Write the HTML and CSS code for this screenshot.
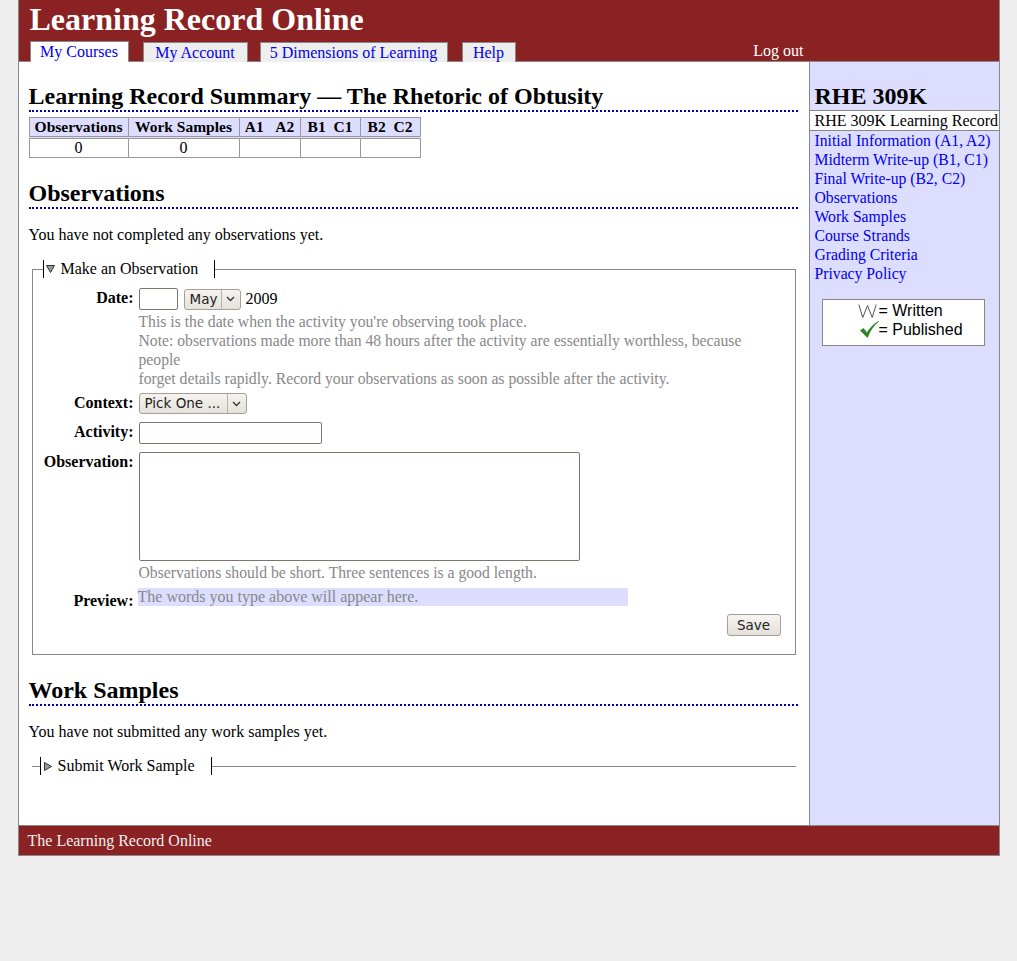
FILE: index.html
```html
<!DOCTYPE html>
<html lang="en">
<head>
<meta charset="utf-8">
<title>Learning Record Online</title>
<link rel="stylesheet" href="styles.css">
</head>
<body>
<div class="page">
  <header class="masthead">
    <h1 class="site-title">Learning Record Online</h1>
    <nav class="tabs">
      <a class="tab tab-active tab-courses" href="#">My Courses</a>
      <a class="tab tab-account" href="#">My Account</a>
      <a class="tab tab-dims" href="#">5 Dimensions of Learning</a>
      <a class="tab tab-help" href="#">Help</a>
      <a class="logout" href="#">Log out</a>
    </nav>
  </header>

  <div class="layout">
    <main class="main">
      <h2 class="section-title first">Learning Record Summary — The Rhetoric of Obtusity</h2>
      <table class="summary">
        <thead>
          <tr>
            <th class="c1">Observations</th>
            <th class="c2">Work Samples</th>
            <th class="c3">A1&nbsp;&nbsp;&nbsp;A2</th>
            <th class="c4">B1&nbsp;&nbsp;C1</th>
            <th class="c5">B2&nbsp;&nbsp;C2</th>
          </tr>
        </thead>
        <tbody>
          <tr>
            <td>0</td>
            <td>0</td>
            <td></td>
            <td></td>
            <td></td>
          </tr>
        </tbody>
      </table>

      <h2 class="section-title obs-title">Observations</h2>
      <p class="note">You have not completed any observations yet.</p>

      <fieldset class="box">
        <legend class="box-legend">
          <svg class="tri" width="9" height="8" viewBox="0 0 9 8"><polygon points="0.5,0.5 8.5,0.5 4.5,7.5" fill="#9a9a9a" stroke="#333" stroke-width="1"/></svg>
          <span>Make an Observation</span>
        </legend>

        <div class="row row-date">
          <label class="lbl">Date:</label>
          <div class="field">
            <div class="inline">
              <span class="input input-day"></span>
              <span class="select select-month"><span class="select-val">May</span><span class="select-arrow"><svg width="9" height="6" viewBox="0 0 9 6"><polyline points="1,1 4.5,4.5 8,1" fill="none" stroke="#333" stroke-width="1.3"/></svg></span></span>
              <span class="year">2009</span>
            </div>
            <div class="help">This is the date when the activity you're observing took place.<br>Note: observations made more than 48 hours after the activity are essentially worthless, because people<br>forget details rapidly. Record your observations as soon as possible after the activity.</div>
          </div>
        </div>

        <div class="row row-context">
          <label class="lbl">Context:</label>
          <div class="field">
            <span class="select select-context"><span class="select-val">Pick One ...</span><span class="select-arrow"><svg width="9" height="6" viewBox="0 0 9 6"><polyline points="1,1 4.5,4.5 8,1" fill="none" stroke="#333" stroke-width="1.3"/></svg></span></span>
          </div>
        </div>

        <div class="row row-activity">
          <label class="lbl">Activity:</label>
          <div class="field">
            <span class="input input-activity"></span>
          </div>
        </div>

        <div class="row row-obs">
          <label class="lbl">Observation:</label>
          <div class="field">
            <span class="input input-text"></span>
            <div class="help help-short">Observations should be short. Three sentences is a good length.</div>
          </div>
        </div>

        <div class="row row-preview">
          <label class="lbl">Preview:</label>
          <div class="field">
            <div class="preview">The words you type above will appear here.</div>
          </div>
        </div>

        <div class="actions">
          <span class="btn">Save</span>
        </div>
      </fieldset>

      <h2 class="section-title work-title">Work Samples</h2>
      <p class="note note-work">You have not submitted any work samples yet.</p>

      <fieldset class="box box-collapsed">
        <legend class="box-legend legend-collapsed">
          <svg class="tri" width="8" height="9" viewBox="0 0 8 9"><polygon points="0.5,0.5 7.5,4.5 0.5,8.5" fill="#9a9a9a" stroke="#333" stroke-width="1"/></svg>
          <span>Submit Work Sample</span>
        </legend>
      </fieldset>
    </main>

    <aside class="side">
      <h2 class="side-title">RHE 309K</h2>
      <div class="side-current">RHE 309K Learning Record</div>
      <ul class="side-links">
        <li><a href="#">Initial Information (A1, A2)</a></li>
        <li><a href="#">Midterm Write-up (B1, C1)</a></li>
        <li><a href="#">Final Write-up (B2, C2)</a></li>
        <li><a href="#">Observations</a></li>
        <li><a href="#">Work Samples</a></li>
        <li><a href="#">Course Strands</a></li>
        <li><a href="#">Grading Criteria</a></li>
        <li><a href="#">Privacy Policy</a></li>
      </ul>
      <div class="key">
        <div class="key-inner">
          <div class="key-row"><svg class="key-w" width="19" height="14" viewBox="0 0 19 14"><polyline points="0.8,0.5 4.8,13.5 9.5,1.5 14.2,13.5 18.2,0.5" fill="none" stroke="#555" stroke-width="1"/></svg><span>= Written</span></div>
          <div class="key-row"><svg class="key-check" width="19" height="17" viewBox="0 0 19 17"><path d="M0.5,9.5 L3.5,7.5 L7,12 C9.5,7.5 13.5,3 18.5,0.5 C13.5,4.5 10,9.5 7.5,16.5 Z" fill="#2a8a1e" stroke="#1d6d14" stroke-width="0.6"/></svg><span>= Published</span></div>
        </div>
      </div>
    </aside>
  </div>

  <footer class="footer">The Learning Record Online</footer>
</div>
</body>
</html>
```

FILE: styles.css
```css
html, body {
  margin: 0;
  padding: 0;
  background: #eeeeee;
}

body {
  font-family: "Liberation Serif", "Times New Roman", serif;
  font-size: 16px;
  color: #000;
}

a {
  color: #0000ee;
  text-decoration: none;
}

.page {
  width: 980px;
  margin: 0 auto;
  border: 1px solid #888;
  border-top: 0;
  background: #fff;
}

/* masthead */
.masthead {
  background: #8a2224;
  padding: 0 0 0 11px;
}

.site-title {
  margin: 0;
  font-size: 32px;
  line-height: 38px;
  font-weight: bold;
  color: #fff;
}

.tabs {
  display: flex;
  align-items: flex-end;
  margin-top: 3px;
  width: 774px;
  height: 20px;
}

.tab {
  position: relative;
  display: block;
  box-sizing: border-box;
  height: 20px;
  line-height: 20px;
  margin-bottom: -1px;
  background: #eeeeee;
  border: 1px solid #888;
  border-bottom: 0;
  color: #0000ee;
  font-size: 16px;
  text-align: center;
}

.tab-courses { width: 99px; }
.tab-account { width: 105px; margin-left: 14px; }
.tab-dims { width: 188px; margin-left: 12px; }
.tab-help { width: 54px; margin-left: 14px; }

.tab-active {
  background: #fff;
  height: 21px;
}

.logout {
  margin-left: auto;
  color: #fff;
  line-height: 20px;
}

/* layout */
.layout {
  display: flex;
  border-top: 1px solid #888;
}

.main {
  width: 770px;
  padding: 0 10px 50px 10px;
}

.side {
  width: 189px;
  border-left: 1px solid #888;
  background: #ddddff;
}

/* headings */
.section-title {
  margin: 22px 0 0 0;
  padding-bottom: 1px;
  font-size: 24px;
  line-height: 26px;
  font-weight: bold;
  border-bottom: 2px dotted #0000aa;
  width: 769px;
}

.section-title.first {
  margin-top: 21px;
}

.note {
  margin: 17px 0 16px 0;
  line-height: 18px;
}

.note-work {
  margin-top: 17px;
  margin-bottom: 16px;
}

/* summary table */
.summary {
  margin-top: 5px;
  border-collapse: collapse;
  line-height: 18px;
}

.summary th,
.summary td {
  border: 1px solid #999;
  padding: 0 5px;
  text-align: center;
}

.summary th {
  background: #ddddff;
  font-weight: bold;
  font-size: 15.5px;
  border-bottom: 3px double #999;
}

.summary td {
  height: 18px;
}

.summary .c1 { width: 88px; }
.summary .c2 { width: 100px; }
.summary .c3 { width: 50px; }
.summary .c4 { width: 49px; }
.summary .c5 { width: 49px; }

/* fieldset */
.box {
  margin: 0 3px;
  padding: 0 14px 18px 10px;
  border: 1px solid #888;
  min-width: 0;
}

.box-legend {
  display: flex;
  align-items: center;
  padding: 0 16px 0 2px;
  height: 18px;
  line-height: 18px;
  border-left: 1px solid #000;
  border-right: 1px solid #000;
}

.box-legend .tri {
  margin-right: 6px;
}

.box-collapsed {
  border-width: 1px 0 0 0;
  padding: 0 0 0 8px;
  margin-top: 0;
}

.legend-collapsed .tri {
  margin-left: 1px;
  margin-right: 6px;
}

/* form rows */
.row {
  display: flex;
  align-items: flex-start;
}

.lbl {
  flex: 0 0 91px;
  text-align: right;
  font-weight: bold;
  line-height: 19px;
  padding-right: 5px;
}

.field {
  width: 620px;
}

.row-date { margin-top: 10px; }
.row-context { margin-top: 5px; }
.row-activity { margin-top: 8px; }
.row-obs { margin-top: 8px; }
.row-preview { margin-top: 6px; }

.inline {
  display: flex;
  align-items: center;
  gap: 6px;
  height: 22px;
}

.year {
  margin-left: -1px;
}

.input {
  display: block;
  box-sizing: border-box;
  height: 22px;
  background: #fff;
  border: 1px solid #7e7668;
  border-radius: 2px;
}

.input-day { width: 39px; }
.input-activity { width: 183px; }
.input-text { width: 441px; height: 109px; }

.select {
  display: flex;
  box-sizing: border-box;
  height: 21px;
  border: 1px solid #a59f95;
  border-radius: 3px;
  background: linear-gradient(#f5f3f0, #e6e2dc);
  font-family: "DejaVu Sans", sans-serif;
  font-size: 13.5px;
  line-height: 19px;
  color: #222;
}

.select-val {
  padding: 0 5px 0 5px;
  border-right: 1px solid #b8b2a8;
}

.select-arrow {
  display: flex;
  align-items: center;
  justify-content: center;
  width: 18px;
}

.select-month { width: 57px; }
.select-month .select-val { width: 26px; }
.select-context { width: 108px; }
.select-context .select-val { width: 78px; }

.help {
  color: #888;
  font-size: 15.7px;
  line-height: 19px;
  margin-top: 2px;
}

.help-short {
  margin-top: 2px;
}

.preview {
  width: 490px;
  margin-left: -1px;
  background: #ddddff;
  color: #888;
  line-height: 18px;
  height: 18px;
}

.row-preview .lbl {
  padding-top: 3px;
}

.actions {
  display: flex;
  justify-content: flex-end;
  margin-top: 4px;
}

.btn {
  display: block;
  box-sizing: border-box;
  width: 54px;
  height: 22px;
  border: 1px solid #a59f95;
  border-radius: 3px;
  background: linear-gradient(#f7f5f2, #e4e0da);
  font-family: "DejaVu Sans", sans-serif;
  font-size: 13.5px;
  line-height: 20px;
  text-align: center;
  color: #222;
}

/* sidebar */
.side-title {
  margin: 21px 0 0 0;
  padding-left: 5px;
  font-size: 24px;
  line-height: 26px;
  font-weight: bold;
}

.side-current {
  margin-top: 1px;
  background: #fff;
  border-top: 1px solid #888;
  border-bottom: 1px solid #888;
  padding-left: 5px;
  line-height: 19px;
  white-space: nowrap;
}

.side-links {
  list-style: none;
  margin: 0;
  padding: 0 0 0 5px;
  font-size: 15.7px;
  line-height: 19px;
}

.key {
  margin: 16px 14px 0 12px;
  background: #fff;
  border: 1px solid #888;
  height: 45px;
}

.key-inner {
  padding: 1px 0 0 35px;
  font-family: "Liberation Sans", Arial, sans-serif;
  font-size: 16px;
  line-height: 19px;
}

.key-row {
  display: flex;
  align-items: center;
  height: 19px;
}

.key-w {
  margin-right: 2px;
}

.key-check {
  margin-left: 2px;
  margin-right: 0;
}

/* footer */
.footer {
  background: #8a2224;
  color: #f0f0f0;
  border-top: 1px solid #888;
  height: 29px;
  line-height: 29px;
  padding-left: 9px;
}
```
